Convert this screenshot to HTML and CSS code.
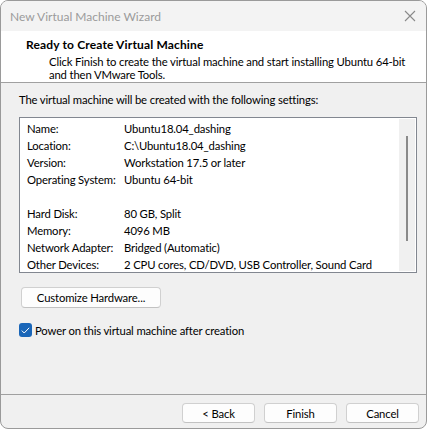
FILE: index.html
```html
<!DOCTYPE html>
<html>
<head>
<meta charset="utf-8">
<link rel="stylesheet" href="styles.css">
</head>
<body>
<div class="window">
  <div class="titlebar">
    <span class="title">New Virtual Machine Wizard</span>
    <svg class="close" width="12" height="12" viewBox="0 0 12 12"><path d="M1 1L11 11M11 1L1 11" stroke="#8a8a8a" stroke-width="1.1" fill="none"/></svg>
  </div>
  <div class="header">
    <div class="h-title">Ready to Create Virtual Machine</div>
    <div class="h-sub">Click Finish to create the virtual machine and start installing Ubuntu 64-bit<br>and then VMware Tools.</div>
  </div>
  <div class="body">
    <div class="intro">The virtual machine will be created with the following settings:</div>
    <div class="listbox">
      <div class="rows">
        <div class="row"><span class="lbl">Name:</span><span>Ubuntu18.04_dashing</span></div>
        <div class="row"><span class="lbl">Location:</span><span>C:\Ubuntu18.04_dashing</span></div>
        <div class="row"><span class="lbl">Version:</span><span>Workstation 17.5 or later</span></div>
        <div class="row"><span class="lbl">Operating System:</span><span>Ubuntu 64-bit</span></div>
        <div class="row"></div>
        <div class="row"><span class="lbl">Hard Disk:</span><span>80 GB, Split</span></div>
        <div class="row"><span class="lbl">Memory:</span><span>4096 MB</span></div>
        <div class="row"><span class="lbl">Network Adapter:</span><span>Bridged (Automatic)</span></div>
        <div class="row"><span class="lbl">Other Devices:</span><span>2 CPU cores, CD/DVD, USB Controller, Sound Card</span></div>
      </div>
      <div class="scroll"><div class="thumb"></div></div>
    </div>
    <button class="btn custom">Customize Hardware...</button>
    <label class="check">
      <span class="box"><svg width="9" height="7" viewBox="0 0 9 7"><path d="M0.8 3.6L3.2 6L8.2 0.8" stroke="#fff" stroke-width="1" fill="none"/></svg></span>
      <span>Power on this virtual machine after creation</span>
    </label>
  </div>
  <div class="footer">
    <button class="btn nav">&lt; Back</button>
    <button class="btn nav">Finish</button>
    <button class="btn nav">Cancel</button>
  </div>
</div>
</body>
</html>
```
FILE: styles.css
```css
html, body {
  margin: 0;
  padding: 0;
  background: #ffffff;
}
body {
  font-family: Lato, "Noto Sans", sans-serif;
  font-size: 11.3px;
  letter-spacing: -0.15px;
  color: #000;
}
.window {
  width: 427px;
  height: 429px;
  box-sizing: border-box;
  border: 1px solid #9a9a9a;
  border-radius: 8px;
  background: #f0f0f0;
  display: flex;
  flex-direction: column;
  overflow: hidden;
}
.titlebar {
  height: 30px;
  flex: none;
  background: #f3f3f3;
  display: flex;
  align-items: center;
  justify-content: space-between;
  padding: 0 9px 0 9px;
}
.title {
  color: #9b9b9b;
  font-size: 12px;
  letter-spacing: 0;
}
.close {
  margin-right: 1px;
}
.header {
  background: #ffffff;
  flex: none;
  height: 52px;
  box-sizing: border-box;
  border-bottom: 1px solid #a0a0a0;
  padding: 7px 0 0 25px;
}
.h-title {
  font-weight: bold;
  font-size: 12px;
  letter-spacing: 0.15px;
  line-height: 14px;
}
.h-sub {
  padding-left: 23px;
  line-height: 13px;
  margin-top: 3px;
  white-space: nowrap;
}
.body {
  flex: 1;
  padding: 10px 10px 0 18px;
  display: flex;
  flex-direction: column;
  align-items: flex-start;
}
.intro {
  line-height: 14px;
}
.listbox {
  margin-top: 10px;
  width: 398px;
  height: 156px;
  box-sizing: border-box;
  border: 1px solid #828790;
  background: #fff;
  display: flex;
  justify-content: space-between;
}
.rows {
  padding: 2px 0 0 7px;
}
.row {
  display: flex;
  height: 17px;
  line-height: 17px;
  white-space: nowrap;
}
.lbl {
  width: 97px;
}
.scroll {
  width: 16px;
  margin: 1px 1px 1px 0;
  background: #f0f0f0;
  position: relative;
}
.thumb {
  position: absolute;
  left: 7px;
  top: 17px;
  width: 2px;
  height: 105px;
  background: #8a8a8a;
}
.btn {
  font-family: inherit;
  font-size: 11.3px;
  letter-spacing: -0.15px;
  color: #000;
  background: #fdfdfd;
  border: 1px solid #d0d0d0;
  border-bottom-color: #c2c2c2;
  border-radius: 4px;
  padding: 0;
  box-sizing: border-box;
}
.custom {
  margin-top: 14px;
  margin-left: 2px;
  width: 140px;
  height: 21px;
}
.check {
  margin-top: 15px;
  display: flex;
  align-items: center;
  gap: 3px;
}
.box {
  width: 13px;
  height: 14px;
  border-radius: 3px;
  background: #1a66b8;
  display: flex;
  align-items: center;
  justify-content: center;
}
.footer {
  height: 34px;
  flex: none;
  box-sizing: border-box;
  border-top: 1px solid #a0a0a0;
  display: flex;
  justify-content: flex-end;
  align-items: flex-start;
  gap: 9px;
  padding: 8px 7px 0 0;
}
.nav {
  width: 73px;
  height: 20px;
}
```
